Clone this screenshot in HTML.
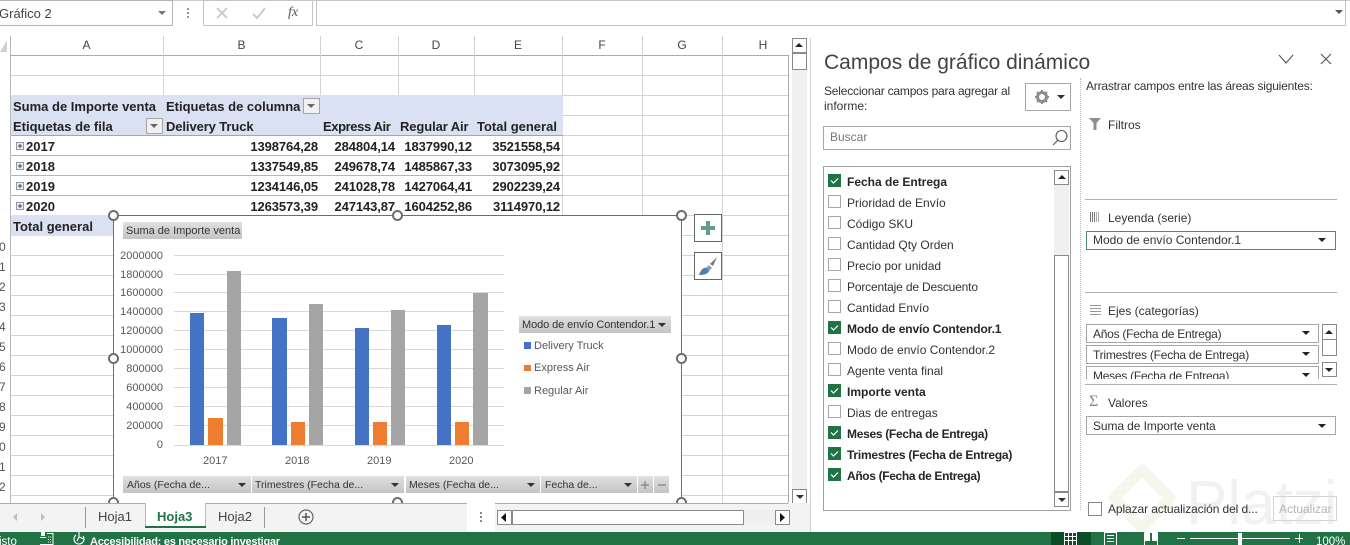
<!DOCTYPE html>
<html><head><meta charset="utf-8">
<style>
html,body{margin:0;padding:0}
#r{position:relative;width:1350px;height:545px;overflow:hidden;background:#fff;font-family:"Liberation Sans",sans-serif;color:#333}
#r div,#r svg{position:absolute}
.t{white-space:nowrap;font-size:12px;line-height:16px}
.b{font-weight:bold;font-size:13px;color:#222;white-space:nowrap;line-height:16px}
.n{font-weight:bold;font-size:13px;color:#222;white-space:nowrap;line-height:16px;text-align:right;letter-spacing:-.1px}
.h{font-size:12px;color:#444;line-height:16px;text-align:center;top:37px}
.gh{height:1px;background:#d4d4d4;left:10px;width:778px}
.gv{width:1px;background:#d4d4d4}
.bx{box-sizing:border-box;border:1px solid #a6a6a6;background:#fff}
.ck{box-sizing:border-box;width:13px;height:13px;left:828px;border:1px solid #a6a6a6;background:#fff}
.ck.on{background:#217346;border-color:#217346}
.l{left:847px;font-size:12px;color:#333;white-space:nowrap;line-height:16px}
.l.on{font-weight:bold;color:#262626}
.btn{background:linear-gradient(#e0e0e0,#c4c4c4);height:17px;font-size:10.5px;line-height:18px;color:#333;white-space:nowrap;overflow:hidden;box-sizing:border-box;padding-left:4px}
.ax{font-size:11px;color:#595959;line-height:14px;text-align:right;left:109px;width:54px}
.tri{width:0;height:0;border-left:4px solid transparent;border-right:4px solid transparent;border-top:4px solid #333}
.tru{width:0;height:0;border-left:4px solid transparent;border-right:4px solid transparent;border-bottom:4px solid #222}
.hd{box-sizing:border-box;width:11px;height:11px;border:2px solid #6e6e6e;border-radius:50%;background:#fff}
.sb{box-sizing:border-box;border:1px solid #8a8a8a;background:#fff}
.rn{left:-1px;color:#555;font-size:12px;line-height:16px}
</style></head><body><div id="r">

<!-- top formula bar -->
<div style="left:0;top:0;width:1350px;height:1px;background:#cfcfcf"></div>
<div class="bx" style="left:-2px;top:0;width:175px;height:26px;border-color:#b5b5b5"></div>
<div class="t" style="left:-1px;top:6px;font-size:13px;color:#444">Gráfico 2</div>
<div class="tri" style="left:158px;top:11px;border-top-color:#777"></div>
<div style="left:187px;top:8px;width:2px;height:2px;background:#999;box-shadow:0 4px 0 #999,0 8px 0 #999"></div>
<div class="bx" style="left:203px;top:0;width:110px;height:26px;border-color:#c4c4c4"></div>
<svg style="left:215px;top:6px" width="100" height="14" viewBox="0 0 100 14"><path d="M2 2L12 12M12 2L2 12" stroke="#c6c6c6" stroke-width="1.6" fill="none"/><path d="M38 8L42 12L50 2" stroke="#c6c6c6" stroke-width="1.8" fill="none"/></svg>
<div style="left:288px;top:5px;font:italic 14px 'Liberation Serif',serif;color:#555">fx</div>
<div class="bx" style="left:316px;top:0;width:1030px;height:26px;border-color:#c4c4c4"></div>
<div class="tri" style="left:1335px;top:10px;border-top-color:#555"></div>

<!-- column headers -->
<div style="left:0;top:36px;width:788px;height:19px;background:#fff"></div>
<svg style="left:0;top:40px" width="8" height="12"><path d="M7 0V12H0Z" fill="#d0d0d0"/></svg>
<div class="gv" style="left:10px;top:36px;height:467px;background:#b8b8b8"></div>
<div class="h" style="left:10px;width:153px">A</div>
<div class="h" style="left:163px;width:157px">B</div>
<div class="h" style="left:320px;width:78px">C</div>
<div class="h" style="left:398px;width:76px">D</div>
<div class="h" style="left:474px;width:88px">E</div>
<div class="h" style="left:562px;width:80px">F</div>
<div class="h" style="left:642px;width:80px">G</div>
<div class="h" style="left:722px;width:82px">H</div>
<div style="left:10px;top:55px;width:778px;height:1px;background:#ababab"></div>
<div style="left:788px;top:55px;width:1px;height:449px;background:#ababab"></div>

<!-- grid -->
<div class="gh" style="top:75px"></div><div class="gh" style="top:95px"></div><div class="gh" style="top:115px"></div><div class="gh" style="top:135px"></div><div class="gh" style="top:155px"></div><div class="gh" style="top:175px"></div><div class="gh" style="top:195px"></div><div class="gh" style="top:215px"></div><div class="gh" style="top:235px"></div><div class="gh" style="top:255px"></div><div class="gh" style="top:275px"></div><div class="gh" style="top:295px"></div><div class="gh" style="top:315px"></div><div class="gh" style="top:335px"></div><div class="gh" style="top:355px"></div><div class="gh" style="top:375px"></div><div class="gh" style="top:395px"></div><div class="gh" style="top:415px"></div><div class="gh" style="top:435px"></div><div class="gh" style="top:455px"></div><div class="gh" style="top:475px"></div><div class="gh" style="top:495px"></div>
<div class="gv" style="left:163px;top:36px;height:60px"></div>
<div class="gv" style="left:320px;top:36px;height:60px"></div>
<div class="gv" style="left:398px;top:36px;height:60px"></div>
<div class="gv" style="left:474px;top:36px;height:60px"></div>
<div class="gv" style="left:562px;top:36px;height:180px"></div>
<div class="gv" style="left:642px;top:36px;height:180px"></div>
<div class="gv" style="left:722px;top:36px;height:467px"></div>

<!-- row numbers -->
<div class="rn" style="top:239px">0</div>
<div class="rn" style="top:259px">1</div>
<div class="rn" style="top:279px">2</div>
<div class="rn" style="top:299px">3</div>
<div class="rn" style="top:319px">4</div>
<div class="rn" style="top:339px">5</div>
<div class="rn" style="top:359px">6</div>
<div class="rn" style="top:379px">7</div>
<div class="rn" style="top:399px">8</div>
<div class="rn" style="top:419px">9</div>
<div class="rn" style="top:439px">0</div>
<div class="rn" style="top:459px">1</div>
<div class="rn" style="top:479px">2</div>

<!-- pivot -->
<div style="left:11px;top:95px;width:552px;height:40px;background:#d9e1f2"></div>
<div style="left:11px;top:135px;width:552px;height:1px;background:#8ea9c9"></div>
<div style="left:11px;top:155px;width:552px;height:1px;background:#a5b8cc"></div>
<div style="left:11px;top:175px;width:552px;height:1px;background:#a5b8cc"></div>
<div style="left:11px;top:195px;width:552px;height:1px;background:#a5b8cc"></div>
<div style="left:11px;top:215px;width:103px;height:21px;background:#d9e1f2"></div>
<div class="b" style="left:13px;top:99px">Suma de Importe venta</div>
<div class="b" style="left:166px;top:99px">Etiquetas de columna</div>
<div class="bx" style="left:303px;top:98px;width:17px;height:16px;background:#f0f0f0"></div>
<div class="tri" style="left:307px;top:104px;border-top-color:#666"></div>
<div class="b" style="left:13px;top:119px">Etiquetas de fila</div>
<div class="bx" style="left:146px;top:118px;width:17px;height:16px;background:#f0f0f0"></div>
<div class="tri" style="left:150px;top:124px;border-top-color:#666"></div>
<div class="b" style="left:166px;top:119px;letter-spacing:-.1px">Delivery Truck</div>
<div class="b" style="left:323px;top:119px;letter-spacing:-.4px">Express Air</div>
<div class="b" style="left:400px;top:119px;letter-spacing:-.1px">Regular Air</div>
<div class="b" style="left:477px;top:119px">Total general</div>

<svg style="left:16px;top:142px" width="10" height="70"><g fill="#e8ecf2" stroke="#8f9aa8"><rect x=".5" y=".5" width="7" height="7"/><rect x=".5" y="20.5" width="7" height="7"/><rect x=".5" y="40.5" width="7" height="7"/><rect x=".5" y="60.5" width="7" height="7"/></g><path d="M2 4H6M4 2V6M2 24H6M4 22V26M2 44H6M4 42V46M2 64H6M4 62V66" stroke="#444"/></svg>
<div class="b" style="left:26px;top:139px">2017</div>
<div class="b" style="left:26px;top:159px">2018</div>
<div class="b" style="left:26px;top:179px">2019</div>
<div class="b" style="left:26px;top:199px">2020</div>
<div class="n" style="left:218px;width:100px;top:139px">1398764,28</div>
<div class="n" style="left:295px;width:100px;top:139px">284804,14</div>
<div class="n" style="left:372px;width:100px;top:139px">1837990,12</div>
<div class="n" style="left:460px;width:100px;top:139px">3521558,54</div>
<div class="n" style="left:218px;width:100px;top:159px">1337549,85</div>
<div class="n" style="left:295px;width:100px;top:159px">249678,74</div>
<div class="n" style="left:372px;width:100px;top:159px">1485867,33</div>
<div class="n" style="left:460px;width:100px;top:159px">3073095,92</div>
<div class="n" style="left:218px;width:100px;top:179px">1234146,05</div>
<div class="n" style="left:295px;width:100px;top:179px">241028,78</div>
<div class="n" style="left:372px;width:100px;top:179px">1427064,41</div>
<div class="n" style="left:460px;width:100px;top:179px">2902239,24</div>
<div class="n" style="left:218px;width:100px;top:199px">1263573,39</div>
<div class="n" style="left:295px;width:100px;top:199px">247143,87</div>
<div class="n" style="left:372px;width:100px;top:199px">1604252,86</div>
<div class="n" style="left:460px;width:100px;top:199px">3114970,12</div>
<div class="b" style="left:13px;top:219px">Total general</div>

<!-- chart -->
<div style="left:113px;top:215px;width:567px;height:288px;background:#fff;box-sizing:content-box;border:1px solid #6e6e6e"></div>
<div class="btn" style="left:123px;top:222px;width:119px;font-size:11px;padding-left:3px;line-height:19px">Suma de Importe venta</div>
<svg style="left:174px;top:250px" width="330" height="200">
<g stroke="#d9d9d9"><path d="M0 5.5H330M0 24.5H330M0 42.5H330M0 61.5H330M0 80.5H330M0 99.5H330M0 118.5H330M0 137.5H330M0 156.5H330M0 175.5H330M0 195.5H330"/></g>
<g fill="#4472c4"><rect x="16" y="63" width="14" height="132"/><rect x="98" y="68" width="15" height="127"/><rect x="181" y="78" width="14" height="117"/><rect x="263" y="75" width="14" height="120"/></g>
<g fill="#ed7d31"><rect x="34" y="168" width="15" height="27"/><rect x="117" y="172" width="14" height="23"/><rect x="199" y="172" width="14" height="23"/><rect x="281" y="172" width="14" height="23"/></g>
<g fill="#a5a5a5"><rect x="53" y="21" width="14" height="174"/><rect x="135" y="54" width="14" height="141"/><rect x="217" y="60" width="14" height="135"/><rect x="299" y="43" width="15" height="152"/></g>
</svg>
<div class="ax" style="top:249px">2000000</div><div class="ax" style="top:268px">1800000</div><div class="ax" style="top:286px">1600000</div><div class="ax" style="top:305px">1400000</div><div class="ax" style="top:324px">1200000</div><div class="ax" style="top:343px">1000000</div><div class="ax" style="top:362px">800000</div><div class="ax" style="top:381px">600000</div><div class="ax" style="top:400px">400000</div><div class="ax" style="top:419px">200000</div><div class="ax" style="top:438px">0</div>
<div class="ax" style="left:203px;top:454px;width:24px;text-align:center">2017</div>
<div class="ax" style="left:285px;top:454px;width:24px;text-align:center">2018</div>
<div class="ax" style="left:367px;top:454px;width:24px;text-align:center">2019</div>
<div class="ax" style="left:449px;top:454px;width:24px;text-align:center">2020</div>

<div class="btn" style="left:519px;top:316px;width:152px;font-size:11px;letter-spacing:-.1px;padding-left:3px;line-height:19px">Modo de envío Contendor.1</div>
<div class="tri" style="left:658px;top:323px"></div>
<div style="left:524px;top:342px;width:7px;height:7px;background:#4472c4"></div>
<div style="left:524px;top:365px;width:7px;height:6px;background:#ed7d31"></div>
<div style="left:524px;top:387px;width:7px;height:7px;background:#a5a5a5"></div>
<div class="ax" style="left:534px;top:339px;width:80px;text-align:left">Delivery Truck</div>
<div class="ax" style="left:534px;top:361px;width:80px;text-align:left">Express Air</div>
<div class="ax" style="left:534px;top:384px;width:80px;text-align:left">Regular Air</div>

<div class="btn" style="left:123px;top:476px;width:128px">Años (Fecha de...</div><div class="tri" style="left:238px;top:483px"></div>
<div class="btn" style="left:252px;top:476px;width:152px;padding-left:3px">Trimestres (Fecha de...</div><div class="tri" style="left:391px;top:483px"></div>
<div class="btn" style="left:406px;top:476px;width:134px;padding-left:3px">Meses (Fecha de...</div><div class="tri" style="left:527px;top:483px"></div>
<div class="btn" style="left:541px;top:476px;width:96px">Fecha de...</div><div class="tri" style="left:624px;top:483px"></div>
<div class="btn" style="left:638px;top:476px;width:15px"></div>
<div class="btn" style="left:654px;top:476px;width:15px"></div>
<svg style="left:640px;top:480px" width="28" height="10"><path d="M1 5H9M5 1V9M18 5H26" stroke="#8c8c8c" stroke-width="1.4" fill="none"/></svg>

<div class="hd" style="left:108px;top:210px"></div>
<div class="hd" style="left:392px;top:210px"></div>
<div class="hd" style="left:676px;top:210px"></div>
<div class="hd" style="left:108px;top:353px"></div>
<div class="hd" style="left:676px;top:353px"></div>
<div class="hd" style="left:108px;top:497px"></div>
<div class="hd" style="left:392px;top:497px"></div>
<div class="hd" style="left:676px;top:497px"></div>

<div class="bx" style="left:694px;top:214px;width:28px;height:28px;border-color:#666"></div>
<svg style="left:701px;top:221px" width="14" height="14"><path d="M5 0H9V5H14V9H9V14H5V9H0V5H5Z" fill="#5f9e87"/></svg>
<div class="bx" style="left:694px;top:252px;width:28px;height:28px;border-color:#666"></div>
<svg style="left:699px;top:256px" width="19" height="20"><path d="M18 1L11 8L14 10Z" fill="#777"/><path d="M10 9L13 12L10 15L7 12Z" fill="#9a9a9a"/><path d="M0 19C2 13 5 11 8 12L10 15C9 18 5 19 0 19Z" fill="#4a7fb8"/></svg>

<!-- vertical sheet scrollbar -->
<div style="left:792px;top:38px;width:15px;height:465px;background:#f0f0f0"></div>
<div class="sb" style="left:792px;top:38px;width:15px;height:15px"></div><div class="tru" style="left:795px;top:43px"></div>
<div class="sb" style="left:792px;top:53px;width:15px;height:17px"></div>
<div class="sb" style="left:792px;top:489px;width:15px;height:15px"></div><div class="tri" style="left:796px;top:495px"></div>
<div style="left:810px;top:38px;width:1px;height:494px;background:#d0d0d0"></div>

<!-- tabs -->
<div style="left:0;top:503px;width:810px;height:29px;background:#f3f3f3"></div>
<div style="left:0;top:503px;width:788px;height:1px;background:#ababab"></div>
<svg style="left:12px;top:512px" width="36" height="10"><path d="M5 1L1 5L5 9ZM29 1L33 5L29 9Z" fill="#bdbdbd"/></svg>
<div style="left:85px;top:507px;width:1px;height:21px;background:#999"></div>
<div class="t" style="left:98px;top:509px;font-size:13px;color:#444">Hoja1</div>
<div style="left:145px;top:503px;width:61px;height:23px;background:#fff;border-left:1px solid #bbb;border-right:1px solid #bbb;box-sizing:border-box"></div>
<div style="left:145px;top:526px;width:61px;height:2px;background:#217346"></div>
<div class="t" style="left:157px;top:509px;font-size:13px;font-weight:bold;color:#217346">Hoja3</div>
<div class="t" style="left:218px;top:509px;font-size:13px;color:#444">Hoja2</div>
<div style="left:264px;top:507px;width:1px;height:21px;background:#999"></div>
<svg style="left:298px;top:509px" width="16" height="16"><circle cx="8" cy="8" r="7" fill="none" stroke="#666" stroke-width="1.2"/><path d="M4 8H12M8 4V12" stroke="#555" stroke-width="1.5"/></svg>
<div style="left:467px;top:503px;width:28px;height:29px;background:#fff"></div>
<div style="left:480px;top:512px;width:2px;height:2px;background:#888;box-shadow:0 4px 0 #888,0 8px 0 #888"></div>
<div style="left:511px;top:510px;width:265px;height:14px;background:#efefef"></div>
<div class="sb" style="left:497px;top:510px;width:15px;height:15px"></div>
<svg style="left:501px;top:513px" width="6" height="9"><path d="M5 0V9L0 4.5Z" fill="#111"/></svg>
<div class="sb" style="left:512px;top:510px;width:232px;height:15px"></div>
<div class="sb" style="left:775px;top:510px;width:15px;height:15px"></div>
<svg style="left:780px;top:513px" width="6" height="9"><path d="M0 0V9L5 4.5Z" fill="#111"/></svg>

<!-- side pane -->
<div style="left:824px;top:50px;font-size:21px;line-height:26px;color:#444;white-space:nowrap">Campos de gráfico dinámico</div>
<svg style="left:1278px;top:53px" width="60" height="14"><path d="M1 2L8 10L15 2M43 1L53 11M53 1L43 11" fill="none" stroke="#555" stroke-width="1.1"/></svg>
<div class="t" style="left:824px;top:83px;color:#333;letter-spacing:-.2px">Seleccionar campos para agregar al</div>
<div class="t" style="left:824px;top:98px;color:#333">informe:</div>
<div class="bx" style="left:1025px;top:83px;width:46px;height:28px"></div>
<svg style="left:1035px;top:90px" width="15" height="14" viewBox="0 0 15 14"><circle cx="7" cy="7" r="4.5" fill="none" stroke="#8d8d8d" stroke-width="3"/><path d="M7 0V2.5M7 11.5V14M0 7H2.5M11.5 7H14M2 2L4 4M10 10L12 12M12 2L10 4M4 10L2 12" stroke="#8d8d8d" stroke-width="2"/></svg>
<div class="tri" style="left:1057px;top:95px"></div>
<div class="bx" style="left:823px;top:126px;width:248px;height:24px"></div>
<div class="t" style="left:830px;top:129px;color:#777">Buscar</div>
<svg style="left:1051px;top:129px" width="18" height="18"><circle cx="10.5" cy="7" r="5.5" fill="none" stroke="#555" stroke-width="1.1"/><path d="M7 11L2 16" stroke="#555" stroke-width="1.1"/></svg>

<div class="bx" style="left:823px;top:166px;width:248px;height:345px;border-color:#a0a0a0"></div>
<div style="left:1054px;top:170px;width:15px;height:336px;background:#f0f0f0"></div>
<div class="sb" style="left:1054px;top:170px;width:15px;height:15px"></div><div class="tru" style="left:1058px;top:175px"></div>
<div class="sb" style="left:1054px;top:255px;width:15px;height:237px"></div>
<div class="sb" style="left:1054px;top:492px;width:15px;height:15px"></div><div class="tri" style="left:1058px;top:498px"></div>

<div class="ck on" style="top:174px"></div><div class="l on" style="top:174px">Fecha de Entrega</div>
<div class="ck" style="top:195px"></div><div class="l" style="top:195px">Prioridad de Envío</div>
<div class="ck" style="top:216px"></div><div class="l" style="top:216px">Código SKU</div>
<div class="ck" style="top:237px"></div><div class="l" style="top:237px">Cantidad Qty Orden</div>
<div class="ck" style="top:258px"></div><div class="l" style="top:258px">Precio por unidad</div>
<div class="ck" style="top:279px"></div><div class="l" style="top:279px;letter-spacing:-.17px">Porcentaje de Descuento</div>
<div class="ck" style="top:300px"></div><div class="l" style="top:300px">Cantidad Envío</div>
<div class="ck on" style="top:321px"></div><div class="l on" style="top:321px;letter-spacing:-.12px">Modo de envío Contendor.1</div>
<div class="ck" style="top:342px"></div><div class="l" style="top:342px">Modo de envío Contendor.2</div>
<div class="ck" style="top:363px"></div><div class="l" style="top:363px">Agente venta final</div>
<div class="ck on" style="top:384px"></div><div class="l on" style="top:384px">Importe venta</div>
<div class="ck" style="top:405px"></div><div class="l" style="top:405px">Dias de entregas</div>
<div class="ck on" style="top:426px"></div><div class="l on" style="top:426px;letter-spacing:-.3px">Meses (Fecha de Entrega)</div>
<div class="ck on" style="top:447px"></div><div class="l on" style="top:447px;letter-spacing:-.24px">Trimestres (Fecha de Entrega)</div>
<div class="ck on" style="top:468px"></div><div class="l on" style="top:468px;letter-spacing:-.35px">Años (Fecha de Entrega)</div>
<svg style="left:828px;top:174px" width="13" height="310"><g fill="none" stroke="#fff" stroke-width="1.2"><path d="M3 6.5L5.5 9L10 4.5"/><path d="M3 153.5L5.5 156L10 151.5"/><path d="M3 216.5L5.5 219L10 214.5"/><path d="M3 258.5L5.5 261L10 256.5"/><path d="M3 279.5L5.5 282L10 277.5"/><path d="M3 300.5L5.5 303L10 298.5"/></g></svg>

<div style="left:1080px;top:78px;width:0;height:432px;border-left:1px dotted #bbb"></div>
<div class="t" style="left:1086px;top:78px;letter-spacing:-.2px">Arrastrar campos entre las áreas siguientes:</div>
<svg style="left:1089px;top:118px" width="12" height="12"><path d="M0 0H12L7.5 5V12H4.5V5Z" fill="#8d8d8d"/></svg>
<div class="t" style="left:1108px;top:117px">Filtros</div>
<div style="left:1085px;top:199px;width:252px;height:1px;background:#b0b0b0"></div>
<svg style="left:1090px;top:212px" width="10" height="10"><path d="M.5 0V10M2.5 0V10M4.5 0V10" stroke="#777"/><path d="M6.5 0V10M8.5 0V10" stroke="#aaa"/></svg>
<div class="t" style="left:1108px;top:210px">Leyenda (serie)</div>
<div class="bx" style="left:1086px;top:231px;width:250px;height:19px;border-color:#4f8a6f"></div>
<div class="t" style="left:1093px;top:232px">Modo de envío Contendor.1</div>
<div class="tri" style="left:1318px;top:238px;border-top-color:#222"></div>
<div style="left:1085px;top:292px;width:252px;height:1px;background:#b0b0b0"></div>
<svg style="left:1090px;top:305px" width="11" height="10"><path d="M0 .5H11M0 3.5H11M0 6.5H11M0 9.5H11" stroke="#999"/></svg>
<div class="t" style="left:1108px;top:303px">Ejes (categorías)</div>
<div class="bx" style="left:1086px;top:324px;width:233px;height:19px"></div>
<div class="t" style="left:1093px;top:326px;letter-spacing:-.25px">Años (Fecha de Entrega)</div>
<div class="tri" style="left:1302px;top:331px;border-top-color:#222"></div>
<div class="bx" style="left:1086px;top:345px;width:233px;height:19px"></div>
<div class="t" style="left:1093px;top:347px;letter-spacing:-.24px">Trimestres (Fecha de Entrega)</div>
<div class="tri" style="left:1302px;top:352px;border-top-color:#222"></div>
<div style="left:1086px;top:366px;width:233px;height:13px;overflow:hidden"><div class="bx" style="left:0;top:0;width:233px;height:19px"></div><div class="t" style="left:7px;top:2px;letter-spacing:-.25px">Meses (Fecha de Entrega)</div><div class="tri" style="left:216px;top:7px;border-top-color:#222"></div></div>
<div class="sb" style="left:1322px;top:324px;width:15px;height:16px"></div><div class="tru" style="left:1325px;top:330px"></div>
<div class="sb" style="left:1322px;top:339px;width:15px;height:17px"></div>
<div class="sb" style="left:1322px;top:362px;width:15px;height:15px"></div><div class="tri" style="left:1325px;top:368px;border-top-color:#222"></div>
<div style="left:1085px;top:384px;width:252px;height:1px;background:#b0b0b0"></div>
<div style="left:1089px;top:393px;font:16px/18px 'Liberation Serif',serif;color:#888">Σ</div>
<div class="t" style="left:1108px;top:395px">Valores</div>
<div class="bx" style="left:1086px;top:416px;width:250px;height:19px"></div>
<div class="t" style="left:1093px;top:418px;letter-spacing:-.1px">Suma de Importe venta</div>
<div class="tri" style="left:1318px;top:424px;border-top-color:#222"></div>

<!-- watermark -->
<svg style="left:1106px;top:462px" width="72" height="70"><path d="M36 8L64 36L36 66L8 36Z" fill="none" stroke="#f4f8ec" stroke-width="11" stroke-linejoin="round"/></svg>
<div style="left:1186px;top:464px;font-size:62px;line-height:80px;color:#f1f1f1;white-space:nowrap">Platzi</div>

<div class="bx" style="left:1088px;top:502px;width:14px;height:14px;border-color:#888;background:#fff"></div>
<div class="t" style="left:1108px;top:501px;letter-spacing:-.1px">Aplazar actualización del d...</div>
<div class="bx" style="left:1273px;top:496px;width:64px;height:25px;background:transparent;border-color:#d4d4d4"></div>
<div class="t" style="left:1279px;top:501px;color:#b5b5b5">Actualizar</div>

<!-- status -->
<div style="left:0;top:532px;width:1350px;height:13px;background:#217346;overflow:hidden">
<div class="t" style="left:-1px;top:3px;color:#fff;font-size:11.5px;line-height:14px">isto</div>
<svg style="left:40px;top:0" width="14" height="13"><rect x="1" y="0" width="4" height="4" fill="#fff"/><path d="M0 5.5H6M7 1.5H13V12.5H0" fill="none" stroke="#fff"/><path d="M8 5H12M8 7.5H12M8 10H12" stroke="#fff" stroke-dasharray="1 1"/></svg>
<svg style="left:71px;top:0" width="16" height="13"><path d="M8 0V5M5 3A5 5 0 1 0 12 4M8 5L13 7M8 5L6 9" fill="none" stroke="#fff" stroke-width="1.1"/></svg>
<div class="t" style="left:90px;top:3px;color:#fff;font-weight:bold;font-size:11px;line-height:14px;letter-spacing:-.25px">Accesibilidad: es necesario investigar</div>
<div style="left:1051px;top:0;width:40px;height:13px;background:#0a4d28"></div>
<svg style="left:1064px;top:0" width="13" height="13"><path d="M.5 .5H12.5V13M.5 .5V13M.5 4.5H12.5M.5 8.5H12.5M4.5 .5V13M8.5 .5V13" fill="none" stroke="#fff"/></svg>
<svg style="left:1104px;top:0" width="13" height="13"><path d="M.5 .5H12.5V13M.5 .5V13M3 3.5H10M3 6.5H10M3 9.5H10" fill="none" stroke="#fff"/></svg>
<svg style="left:1144px;top:0" width="14" height="13"><path d="M.5 .5H13.5V13M.5 .5V13" fill="none" stroke="#fff"/><rect x="1" y="1" width="5" height="8" fill="#fff"/><rect x="8" y="1" width="5" height="8" fill="#fff"/></svg>
<div style="left:1177px;top:6px;width:8px;height:1px;background:#fff"></div>
<div style="left:1190px;top:6px;width:100px;height:1px;background:#fff"></div>
<div style="left:1238px;top:1px;width:4px;height:12px;background:#fff"></div>
<div style="left:1295px;top:6px;width:8px;height:1px;background:#fff"></div>
<div style="left:1299px;top:2px;width:1px;height:9px;background:#fff"></div>
<div class="t" style="left:1316px;top:3px;color:#fff;font-size:11.5px;line-height:14px">100%</div>
</div>

</div></body></html>
